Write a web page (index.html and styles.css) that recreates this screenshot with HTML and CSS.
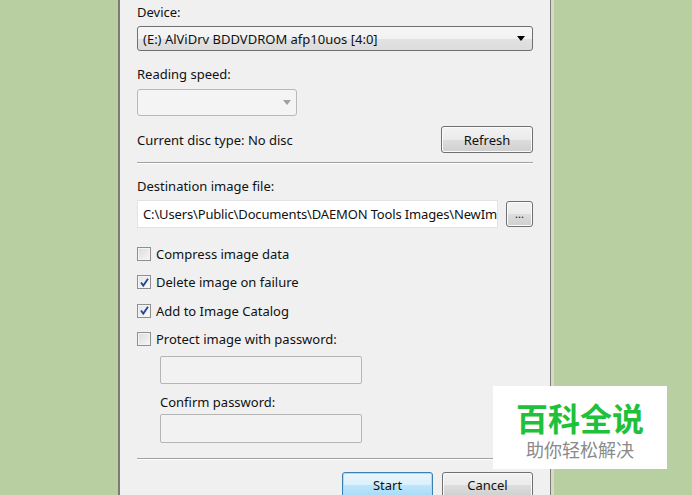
FILE: index.html
```html
<!DOCTYPE html>
<html lang="en">
<head>
    <meta charset="UTF-8">
    <title>Create Image</title>
    <link rel="stylesheet" href="styles.css">
</head>
<body>

    <div class="window">
        <div class="label first">Device:</div>
        <div class="combo device">
            <span>(E:) AlViDrv BDDVDROM afp10uos [4:0]</span>
            <span class="arrow"></span>
        </div>

        <div class="label">Reading speed:</div>
        <div class="combo speed disabled">
            <span></span>
            <span class="arrow"></span>
        </div>

        <div class="row disc">
            <span>Current disc type: No disc</span>
            <button class="btn refresh">Refresh</button>
        </div>

        <hr class="sep">

        <div class="label dest">Destination image file:</div>
        <div class="row path">
            <div class="field">C:\Users\Public\Documents\DAEMON Tools Images\NewIm</div>
            <button class="btn browse">...</button>
        </div>

        <div class="checks">
            <label class="check"><span class="box"></span>Compress image data</label>
            <label class="check"><span class="box checked"><svg width="11" height="11" viewBox="0 0 11 11"><path d="M2 5.5 L4.3 8.6 L9 1.8" fill="none" stroke="#27449b" stroke-width="1.8"/></svg></span>Delete image on failure</label>
            <label class="check"><span class="box checked"><svg width="11" height="11" viewBox="0 0 11 11"><path d="M2 5.5 L4.3 8.6 L9 1.8" fill="none" stroke="#27449b" stroke-width="1.8"/></svg></span>Add to Image Catalog</label>
            <label class="check"><span class="box"></span>Protect image with password:</label>
        </div>

        <div class="password">
            <div class="pw-field"></div>
            <div class="label confirm">Confirm password:</div>
            <div class="pw-field"></div>
        </div>

        <hr class="sep bottom">

        <div class="actions">
            <button class="btn big default">Start</button>
            <button class="btn big">Cancel</button>
        </div>
    </div>

    <div class="watermark">
        <div class="wm-title">百科全说</div>
        <div class="wm-sub">助你轻松解决</div>
    </div>

</body>
</html>
```

FILE: styles.css
```css
body {
    margin: 0;
    height: 495px;
    overflow: hidden;
    background-color: #b8cfa1;
    font-family: 'Noto Sans', sans-serif;
    font-size: 13px;
    color: #111;
    position: relative;
}

.window {
    margin-left: 118px;
    width: 396px;
    height: 540px;
    padding: 0 17px 0 17px;
    background-color: #f0f0f0;
    border-left: 2px solid #7b7b76;
    border-right: 1px solid #7a7a76;
    box-shadow: 3px 0 0 #dcd8c8;
}

.label {
    height: 17px;
    line-height: 17px;
}

.label.first {
    padding-top: 4px;
    margin-bottom: 5px;
}

.combo {
    display: flex;
    align-items: center;
    justify-content: space-between;
    box-sizing: border-box;
    border: 1px solid #707070;
    border-radius: 3px;
    padding: 0 7px 0 5px;
    background: linear-gradient(#f6f6f6, #f2f2f2 50%, #e2e2e2 51%, #dcdcdc);
}

.combo.device {
    height: 25px;
    margin-bottom: 15px;
}

.combo .arrow {
    width: 0;
    height: 0;
    border-left: 4px solid transparent;
    border-right: 4px solid transparent;
    border-top: 5px solid #000;
}

.label + .combo.speed {
    margin-top: 6px;
}

.combo.speed {
    width: 160px;
    height: 27px;
    background: #f4f4f4;
    border-color: #b9b9b9;
    padding-right: 5px;
}

.combo.disabled .arrow {
    border-top-color: #a0a0a0;
}

.row {
    display: flex;
    align-items: center;
    justify-content: space-between;
}

.row.disc {
    margin-top: 10px;
}

.btn {
    font-family: 'Noto Sans', sans-serif;
    font-size: 13px;
    color: #111;
    border: 1px solid #707070;
    border-radius: 3px;
    background: linear-gradient(#f2f2f2, #ebebeb 50%, #dddddd 51%, #cfcfcf);
    padding: 0;
    box-shadow: inset 0 0 0 1px #fbfbfb;
}

.btn.refresh {
    width: 92px;
    height: 27px;
}

.sep {
    margin: 9px 0 0 0;
    border: none;
    border-top: 1px solid #a0a0a0;
    border-bottom: 1px solid #ffffff;
    height: 0;
}

.label.dest {
    margin-top: 14px;
}

.row.path {
    margin-top: 5px;
}

.field {
    box-sizing: border-box;
    width: 361px;
    height: 28px;
    line-height: 26px;
    padding: 0 4px 0 5px;
    background: #fff;
    border: 1px solid #e3e3e3;
    white-space: nowrap;
    letter-spacing: -0.15px;
    overflow: hidden;
}

.btn.browse {
    width: 27px;
    height: 26px;
    font-size: 11px;
    line-height: 18px;
}

.checks {
    margin-top: 17px;
    display: flex;
    flex-direction: column;
    gap: 11.5px;
}

.check {
    display: flex;
    align-items: center;
    height: 17px;
    gap: 5px;
}

.box {
    box-sizing: border-box;
    width: 14px;
    height: 14px;
    border: 1px solid #8e8f8f;
    background: linear-gradient(135deg, #dcdcdc, #f6f6f6);
    box-shadow: inset 0 0 0 1px #f4f4f4;
    display: flex;
    align-items: center;
    justify-content: center;
}

.box.checked {
    background: linear-gradient(135deg, #e4e4e4, #fbfbfb);
}

.password {
    margin-left: 23px;
    margin-top: 8px;
    width: 202px;
}

.pw-field {
    box-sizing: border-box;
    height: 28px;
    border: 1px solid #b5b5b5;
    border-radius: 2px;
    background: #f2f2f2;
}

.pw-field:last-child {
    height: 29px;
}

.label.confirm {
    margin: 10px 0 3px 0;
}

.sep.bottom {
    margin-top: 15px;
}

.actions {
    display: flex;
    justify-content: flex-end;
    gap: 9px;
    margin-top: 12px;
}

.btn.big {
    width: 91px;
    height: 26px;
}

.btn.default {
    border-color: #3c7fb1;
    background: linear-gradient(#eaf6fd, #d9f0fc 50%, #bee6fd 51%, #a7d9f5);
    box-shadow: inset 0 0 0 1px #9ee2f9;
}

.watermark {
    position: absolute;
    left: 493px;
    top: 386px;
    width: 174px;
    height: 83px;
    background: #fff;
    text-align: center;
    font-family: 'Noto Sans CJK SC', sans-serif;
}

.wm-title {
    margin-top: 13px;
    font-size: 32px;
    line-height: 36px;
    font-weight: bold;
    color: #1fc13c;
}

.wm-sub {
    margin-top: 3px;
    font-size: 18px;
    line-height: 22px;
    color: #8a8a8a;
}
```
